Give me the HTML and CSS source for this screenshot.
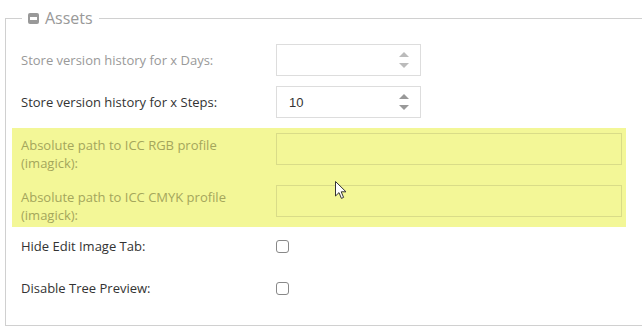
FILE: index.html
```html
<!DOCTYPE html>
<html lang="en">
  <head>
    <meta charset="UTF-8" />
    <title>Assets</title>
    <link rel="stylesheet" href="styles.css">
  </head>
  <body>
    <fieldset class="panel">
      <legend class="panel-title">
        <span class="collapse-icon"></span>
        <span>Assets</span>
      </legend>

      <div class="row">
        <label class="field-label disabled">Store version history for x Days:</label>
        <div class="spinner">
          <input type="text" class="text-input" value="" />
          <div class="arrows">
            <span class="arrow up"></span>
            <span class="arrow down"></span>
          </div>
        </div>
      </div>

      <div class="row">
        <label class="field-label">Store version history for x Steps:</label>
        <div class="spinner">
          <input type="text" class="text-input" value="10" />
          <div class="arrows">
            <span class="arrow up dark"></span>
            <span class="arrow down dark"></span>
          </div>
        </div>
      </div>

      <!-- highlighted imagick settings -->
      <div class="highlight">
        <div class="row tall">
          <label class="field-label">Absolute path to ICC RGB profile (imagick):</label>
          <input type="text" class="text-input wide" />
        </div>
        <div class="row tall">
          <label class="field-label">Absolute path to ICC CMYK profile (imagick):</label>
          <input type="text" class="text-input wide" />
        </div>
        <svg class="cursor" width="12" height="19" viewBox="0 0 12 19">
          <path d="M0.5 0.5 L0.5 15 L4 11.6 L6.4 17.4 L8.6 16.4 L6.2 10.8 L11 10.8 Z" fill="#fff" stroke="#333" stroke-width="1" />
        </svg>
      </div>

      <div class="row check">
        <label class="field-label">Hide Edit Image Tab:</label>
        <span class="checkbox"></span>
      </div>

      <div class="row check">
        <label class="field-label">Disable Tree Preview:</label>
        <span class="checkbox"></span>
      </div>
    </fieldset>
  </body>
</html>
```

FILE: styles.css
```css
* {
  margin: 0;
  padding: 0;
  box-sizing: border-box;
  font-family: "Open Sans", "Noto Sans", sans-serif;
}

body {
  background-color: white;
  width: 642px;
  height: 332px;
  overflow: hidden;
}

.panel {
  margin: 10px 0 0 5px;
  width: 660px;
  height: 316px;
  border: 1px solid #d0d0d0;
  padding: 13px 0 0 6px;
}

.panel-title {
  display: flex;
  align-items: center;
  margin-left: 10px;
  padding: 0 6px 0 6px;
  color: #999;
  font-size: 16px;
  line-height: 16px;
}

.collapse-icon {
  position: relative;
  display: inline-block;
  width: 11px;
  height: 11px;
  margin-right: 6px;
  background-color: #999;
  border-radius: 2px;
}

.collapse-icon::after {
  content: "";
  position: absolute;
  left: 2px;
  top: 4px;
  width: 7px;
  height: 3px;
  background-color: white;
}

.row {
  display: flex;
  align-items: center;
  height: 42px;
  padding-left: 9px;
}

.field-label {
  width: 255px;
  flex-shrink: 0;
  padding-right: 25px;
  font-size: 13px;
  line-height: 18px;
  color: #333;
}

.field-label.disabled {
  color: #999;
}

.spinner {
  position: relative;
  width: 145px;
  height: 32px;
}

.text-input {
  width: 100%;
  height: 32px;
  border: 1px solid #ddd;
  background: white;
  padding: 0 12px;
  font-size: 13px;
  font-family: "Liberation Sans", Arial, sans-serif;
  color: #333;
  outline: none;
}

.arrows {
  position: absolute;
  right: 12px;
  top: 8px;
  display: flex;
  flex-direction: column;
  gap: 6px;
}

.arrow {
  width: 0;
  height: 0;
  border-left: 5px solid transparent;
  border-right: 5px solid transparent;
}

.arrow.up {
  border-bottom: 5px solid #bbb;
}

.arrow.down {
  border-top: 5px solid #bbb;
}

.arrow.up.dark {
  border-bottom-color: #999;
}

.arrow.down.dark {
  border-top-color: #999;
}

.highlight {
  position: relative;
  margin-top: 5px;
  width: 614px;
  padding-top: 5px;
  background-color: #f3f797;
}

.row.tall {
  align-items: flex-start;
  height: 52px;
}

.row.tall:last-of-type {
  height: 42px;
}

.row.tall .field-label {
  padding-top: 3px;
  color: #a4a65c;
}

.text-input.wide {
  width: 346px;
  height: 32px;
  background: transparent;
  border-color: #d9dc88;
}

.cursor {
  position: absolute;
  left: 323px;
  top: 53px;
}

.row.check {
  align-items: flex-start;
}

.row.check .field-label {
  padding-top: 10px;
}

.checkbox {
  display: inline-block;
  margin-top: 13px;
  width: 13px;
  height: 13px;
  border: 1px solid #888;
  border-radius: 3px;
  background: white;
}
```
